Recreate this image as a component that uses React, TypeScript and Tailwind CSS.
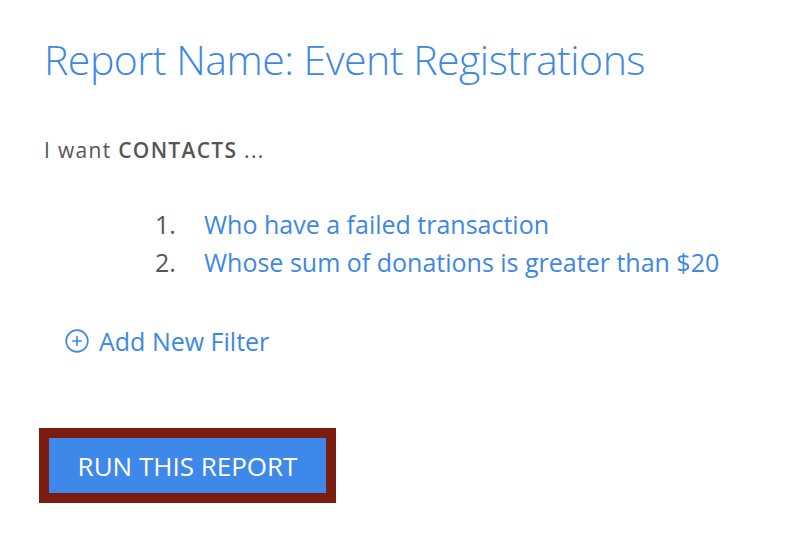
import { CirclePlus } from "lucide-react";

const filters = [
  "Who have a failed transaction",
  "Whose sum of donations is greater than $20",
];

const App = () => (
  <div className="w-[800px] h-[558px] bg-white font-['Open_Sans',sans-serif]">
    <div className="pl-[44px] pt-[34px]">
      <h1 className="text-[41px] leading-[50px] font-light text-[#3d87e6] tracking-[-0.5px]">
        Report Name: Event Registrations
      </h1>

      <p className="mt-[52px] text-[21px] leading-[28px] tracking-[1.3px] text-[#555]">
        I want <span className="font-semibold">CONTACTS</span> ...
      </p>

      <ol className="mt-[45px] ml-[111px] space-y-[8px] text-[25px] leading-[30px]">
        {filters.map((filter, i) => (
          <li key={filter} className="flex">
            <span className="w-[49px] text-[#555]">{i + 1}.</span>
            <a href="#" className="text-[#3d87e6]">
              {filter}
            </a>
          </li>
        ))}
      </ol>

      <button className="mt-[49px] ml-[20px] flex items-center gap-[9px] text-[25px] leading-[30px] text-[#3d87e6]">
        <CirclePlus size={26} strokeWidth={1.5} />
        Add New Filter
      </button>

      <div className="mt-[72px] ml-[-5px] inline-block bg-[#7a1c10] p-[10px]">
        <button className="w-[277px] h-[55px] bg-[#3d88e8] text-white text-[26px] leading-[30px]">
          RUN THIS REPORT
        </button>
      </div>
    </div>
  </div>
);

export default App;
